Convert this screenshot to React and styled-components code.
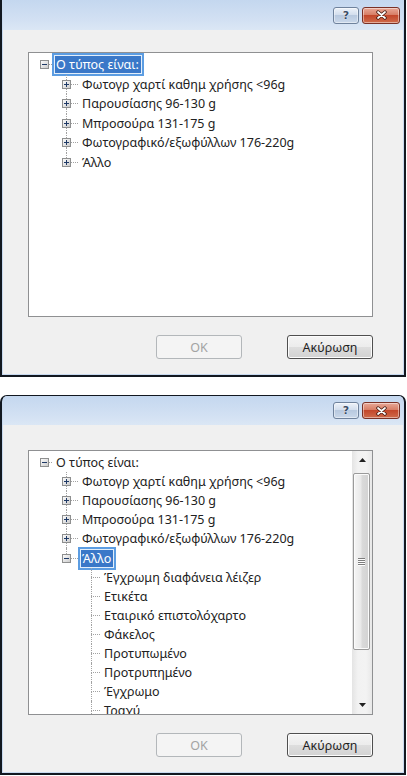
import React from 'react';
import styled, { createGlobalStyle, css } from 'styled-components';

const GlobalStyle = createGlobalStyle`
  html, body {
    margin: 0;
    padding: 0;
    background: #fff;
  }
  body {
    font-family: "Noto Sans", "Open Sans", "DejaVu Sans", sans-serif;
  }
`;

const Page = styled.div`
  width: 407px;
  height: 776px;
  display: flex;
  flex-direction: column;
  gap: 18px;
  overflow: hidden;
`;

const Window = styled.div`
  width: 406px;
  box-sizing: border-box;
  display: flex;
  flex-direction: column;
  background: #c7d9ef;
  border: 2px solid #121820;
  border-top-width: ${p => (p.$cropped ? 0 : 1)}px;
  border-radius: ${p => (p.$cropped ? '0' : '7px 7px 0 0')};
  padding: 0 1px 1px;
  overflow: hidden;
`;

const TitleBar = styled.div`
  height: ${p => p.$h}px;
  display: flex;
  align-items: center;
  justify-content: flex-end;
  gap: 3px;
  padding-right: 3px;
  background: linear-gradient(#c4d7ef, #d3e1f3 70%, #dbe7f5);
`;

const CaptionButton = styled.div`
  width: ${p => p.$w}px;
  height: 17px;
  box-sizing: border-box;
  display: flex;
  align-items: center;
  justify-content: center;
  border: 1px solid ${p => (p.$close ? '#7a3126' : '#6f829c')};
  border-radius: 3px;
  background: ${p =>
    p.$close
      ? 'linear-gradient(#e9a897, #d77e66 45%, #c3472b 50%, #cf6b4b)'
      : 'linear-gradient(#edf2f9, #d3deed 45%, #b8c9df 50%, #cad8ea)'};
  box-shadow: inset 0 0 0 1px rgba(255, 255, 255, 0.45);
`;

const HelpGlyph = styled.span`
  font: bold 11px "DejaVu Sans", sans-serif;
  line-height: 11px;
  color: #3a4c66;
  text-shadow: 0 0 1px #fff, 0 0 1px #fff;
`;

const Client = styled.div`
  height: ${p => p.$h}px;
  box-sizing: border-box;
  display: flex;
  flex-direction: column;
  padding: ${p => p.$top}px 30px 0 25px;
  background: #f0f0f0;
`;

const TreeBox = styled.div`
  height: 265px;
  box-sizing: border-box;
  display: flex;
  border: 1px solid #8f9092;
  background: #fff;
`;

const TreeBody = styled.div`
  flex: 1;
  overflow: hidden;
  padding-top: 2px;
`;

const Row = styled.div`
  height: ${p => p.$h}px;
  display: flex;
  align-items: stretch;
  padding-left: ${p => p.$indent}px;
`;

const Joint = styled.div`
  width: 9px;
  flex: none;
  display: flex;
  flex-direction: column;
  svg {
    display: block;
    flex: none;
  }
`;

const Stem = styled.div`
  flex: 1;
  margin-left: 4px;
  border-left: 1px dotted ${p => (p.$on ? '#a2a2a2' : 'transparent')};
`;

const Connector = styled.div`
  align-self: center;
  flex: none;
  width: ${p => p.$w}px;
  margin-left: ${p => (p.$leaf ? -5 : 0)}px;
  border-top: 1px dotted #a2a2a2;
`;

const Label = styled.span`
  align-self: center;
  flex: none;
  padding: 2px 3px 2px 2px;
  border: 2px solid transparent;
  font-size: 12.5px;
  line-height: 15px;
  color: #222;
  white-space: nowrap;
  ${p =>
    p.$selected &&
    css`
      background: #3a78c8;
      border-color: #5c9de2;
      box-shadow: inset 0 0 0 1px #e3eefa;
      color: #fff;
    `}
`;

const ScrollBar = styled.div`
  width: 20px;
  flex: none;
  display: flex;
  flex-direction: column;
  background: linear-gradient(to right, #e4e4e4, #f2f2f2 30%, #f3f3f3 70%, #e8e8e8);
`;

const ArrowButton = styled.div`
  height: 18px;
  flex: none;
  display: flex;
  align-items: center;
  justify-content: center;
`;

const Thumb = styled.div`
  height: 177px;
  flex: none;
  box-sizing: border-box;
  margin: 4px 2px 0 1px;
  display: flex;
  align-items: center;
  justify-content: center;
  border: 1px solid #9a9a9a;
  border-radius: 2px;
  background: linear-gradient(to right, #f5f5f5, #e9e9e9 45%, #dadada 55%, #d2d2d2);
  box-shadow: inset 0 0 0 1px #fbfbfb;
`;

const Track = styled.div`
  flex: 1;
`;

const ButtonRow = styled.div`
  margin-top: 18px;
  display: flex;
  justify-content: flex-end;
  gap: 45px;
`;

const Button = styled.button`
  width: 86px;
  height: 24px;
  box-sizing: border-box;
  padding: 0;
  border: 1px solid ${p => (p.disabled ? '#b3b7ba' : '#4f4f4f')};
  border-radius: 3px;
  background: ${p =>
    p.disabled
      ? '#f4f4f4'
      : 'linear-gradient(#f4f4f4 0%, #ececec 50%, #dedede 50%, #d2d2d2 100%)'};
  box-shadow: ${p => (p.disabled ? 'none' : 'inset 0 0 0 1px #fcfcfc')};
  font: 12.5px "Noto Sans", "Open Sans", sans-serif;
  color: ${p => (p.disabled ? '#a3a3a3' : '#1f1f1f')};
`;

// tree geometry per level
const INDENT = [11, 33, 58];
const LINK = [3, 7, 9];

const Expander = ({ open }) => (
  <svg width="9" height="9" viewBox="0 0 9 9">
    <defs>
      <linearGradient id="expfill" x1="0" y1="0" x2="1" y2="1">
        <stop offset="0" stopColor="#ffffff" />
        <stop offset="1" stopColor="#c9c9c9" />
      </linearGradient>
    </defs>
    <rect x="0.5" y="0.5" width="8" height="8" fill="url(#expfill)" stroke="#8e8f8f" />
    <path d="M2 4.5h5" stroke="#1f3a66" />
    {!open && <path d="M4.5 2v5" stroke="#1f3a66" />}
  </svg>
);

const CloseGlyph = () => (
  <svg width="13" height="10" viewBox="0 0 13 10">
    <path d="M3 2L10 8M10 2L3 8" stroke="#40170f" strokeWidth="3.4" strokeLinecap="round" />
    <path d="M3 2L10 8M10 2L3 8" stroke="#fff" strokeWidth="1.8" strokeLinecap="round" />
  </svg>
);

const Arrow = ({ down }) => (
  <svg width="7" height="4" viewBox="0 0 7 4">
    <path d={down ? 'M0 0h7L3.5 4z' : 'M0 4h7L3.5 0z'} fill="#222" />
  </svg>
);

const Grip = () => (
  <svg width="7" height="8" viewBox="0 0 7 8">
    {[0, 2, 4, 6].map(y => (
      <g key={y}>
        <path d={`M0 ${y + 0.5}h7`} stroke="#7d7d7d" />
        <path d={`M0 ${y + 1.5}h7`} stroke="#fdfdfd" />
      </g>
    ))}
  </svg>
);

const TreeRow = ({ row, h }) => {
  const leaf = !row.exp;
  return (
    <Row $h={h} $indent={INDENT[row.level]}>
      <Joint>
        <Stem $on={row.up} />
        {!leaf && <Expander open={row.exp === 'minus'} />}
        <Stem $on={row.down} />
      </Joint>
      <Connector $w={LINK[row.level]} $leaf={leaf} />
      <Label $selected={row.selected}>{row.label}</Label>
    </Row>
  );
};

const papers = [
  'Φωτογρ χαρτί καθημ χρήσης <96g',
  'Παρουσίασης 96-130 g',
  'Μπροσούρα 131-175 g',
  'Φωτογραφικό/εξωφύλλων 176-220g',
];

const others = [
  'Έγχρωμη διαφάνεια λέιζερ',
  'Ετικέτα',
  'Εταιρικό επιστολόχαρτο',
  'Φάκελος',
  'Προτυπωμένο',
  'Προτρυπημένο',
  'Έγχρωμο',
  'Τραχύ',
];

const buildRows = open => [
  { level: 0, label: 'Ο τύπος είναι:', exp: 'minus', selected: !open },
  ...papers.map(label => ({ level: 1, label, exp: 'plus', up: true, down: true })),
  { level: 1, label: 'Άλλο', exp: open ? 'minus' : 'plus', up: true, selected: open },
  ...(open ? others.map(label => ({ level: 2, label, up: true, down: true })) : []),
];

const Dialog = ({ open }) => {
  const rows = buildRows(open);
  return (
    <Window $cropped={!open}>
      <TitleBar $h={open ? 29 : 30}>
        <CaptionButton $w={26}>
          <HelpGlyph>?</HelpGlyph>
        </CaptionButton>
        <CaptionButton $w={38} $close>
          <CloseGlyph />
        </CaptionButton>
      </TitleBar>
      <Client $h={open ? 347 : 344} $top={open ? 25 : 22}>
        <TreeBox>
          <TreeBody>
            {rows.map(row => (
              <TreeRow key={row.label} row={row} h={open ? 19.1 : 19.5} />
            ))}
          </TreeBody>
          {open && (
            <ScrollBar>
              <ArrowButton>
                <Arrow />
              </ArrowButton>
              <Thumb>
                <Grip />
              </Thumb>
              <Track />
              <ArrowButton>
                <Arrow down />
              </ArrowButton>
            </ScrollBar>
          )}
        </TreeBox>
        <ButtonRow>
          <Button disabled>OK</Button>
          <Button>Ακύρωση</Button>
        </ButtonRow>
      </Client>
    </Window>
  );
};

const App = () => (
  <>
    <GlobalStyle />
    <Page>
      <Dialog />
      <Dialog open />
    </Page>
  </>
);

export default App;
